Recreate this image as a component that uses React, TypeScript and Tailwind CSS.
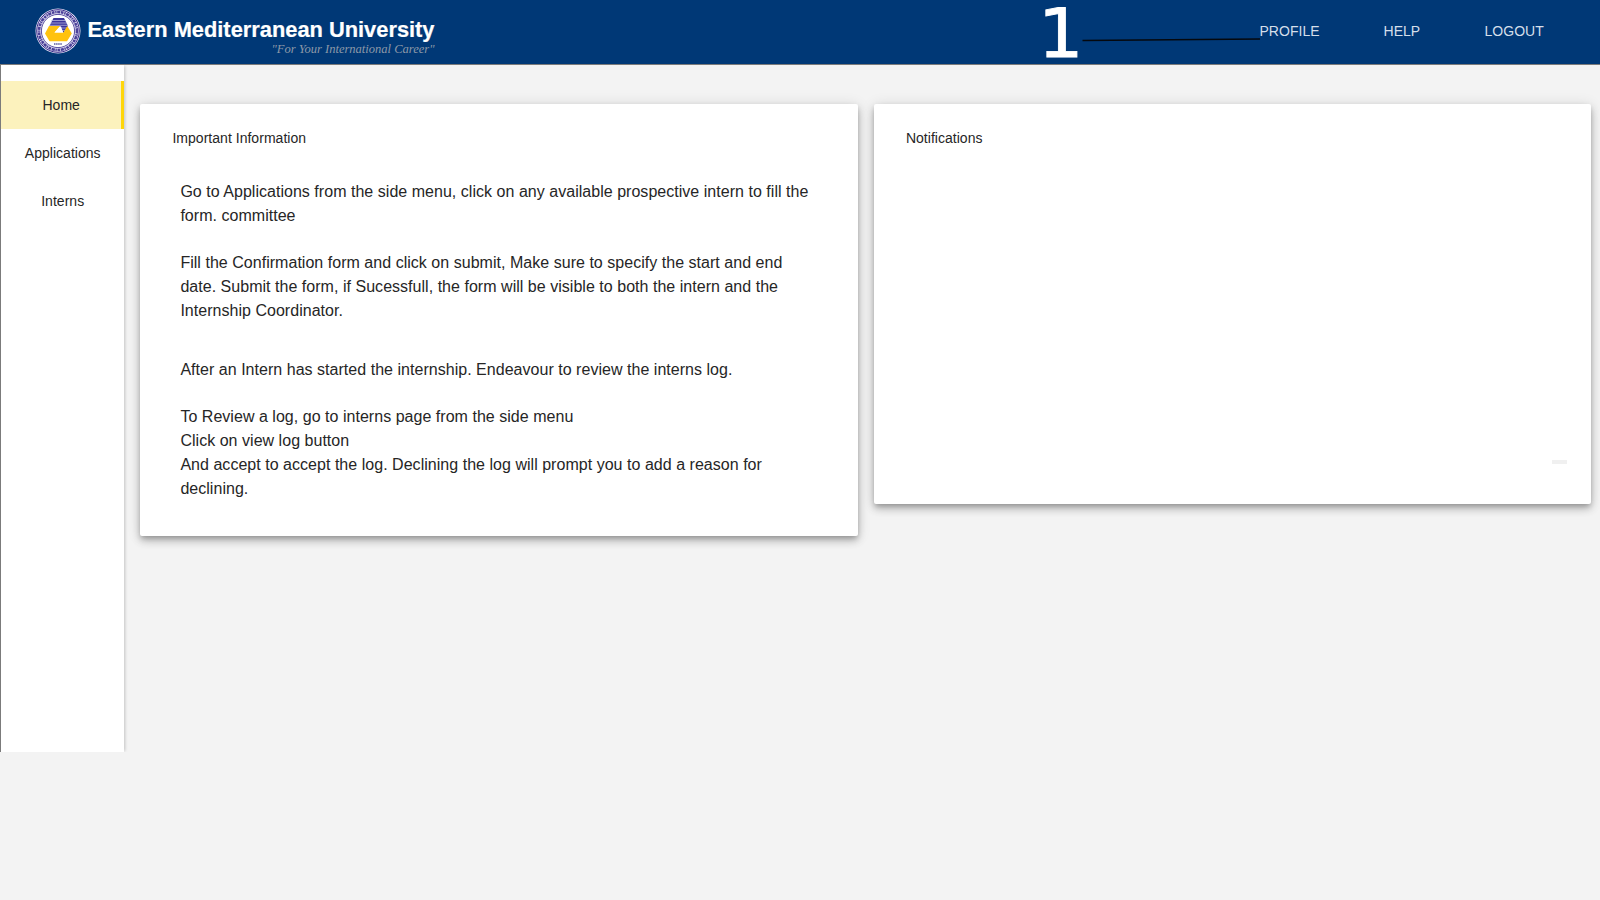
import React from "react";

const navLinks = [
  { label: "PROFILE", className: "w-[60px]" },
  { label: "HELP", className: "ml-16 w-[37px]" },
  { label: "LOGOUT", className: "ml-16 w-[60px]" },
];

function Crest() {
  return (
    <svg width="46" height="46" viewBox="0 0 46 46" className="shrink-0">
      <circle cx="23" cy="23" r="22.500" fill="#e4e3f3" />
      <circle cx="23" cy="23" r="21.300" fill="none" stroke="#3b2c8c" strokeWidth="1" />
      <circle cx="23" cy="23" r="19" fill="none" stroke="#4b4099" strokeWidth="2.600" strokeDasharray="2.600 0.700 1.400 0.600 3.200 0.700" />
      <circle cx="23" cy="23" r="16.600" fill="#fff" stroke="#4a3d98" strokeWidth="0.900" />
      <path d="M18.500 10h10.500l4 8-4.500 7-4-7H14.500z" fill="#3b359b" />
      <path d="M16 12.500h15M15 15h17M14 17.300h19M26 20h6M27 22.400h4" stroke="#c9c8ea" strokeWidth="0.700" />
      <path d="M14 17.900h11L19.500 24.500H28.500L32.300 17.900l4.500 7.600L32 33.200H14.500L10 25.500z" fill="#ffc20e" />
      <path d="M25.800 18l2.400 6.500h-8.700z" fill="#fff" />
      <path d="M19 36h8" stroke="#57579a" strokeWidth="1.500" strokeDasharray="1.500 .6" />
    </svg>
  );
}

function Header() {
  return (
    <header className="flex h-[65px] border-b border-[#7b7b7b] bg-[#003876] pl-[35px] pr-[55.500px]">
      <div className="flex pt-2">
        <Crest />
        <svg width="360" height="50" className="shrink-0 overflow-visible">
          <text x="6.500" y="28.500" textLength="347" lengthAdjust="spacingAndGlyphs" fill="#fff" stroke="#fff" strokeWidth="0.200" className="font-['Liberation_Sans',sans-serif] text-[21.500px] font-bold">
            Eastern Mediterranean University
          </text>
          <text x="190.500" y="45" textLength="163" lengthAdjust="spacingAndGlyphs" fill="#8d99a8" className="font-['Liberation_Serif',serif] text-[13.500px] italic">
            "For Your International Career"
          </text>
        </svg>
      </div>
      <div className="ml-auto flex">
        <svg width="230" height="64" className="shrink-0 overflow-visible">
          <text x="8" y="56.500" textLength="45.500" lengthAdjust="spacingAndGlyphs" fill="#fff" stroke="#fff" strokeWidth="0.800" className="font-['DejaVu_Sans',sans-serif] text-[68px]">
            1
          </text>
          <path d="M52.500 40.500L230 39" stroke="#05080d" strokeWidth="1.300" />
        </svg>
        <nav className="flex pt-[21px] text-[14px] leading-5 tracking-[0.02px] text-[#d5dfea]">
          {navLinks.map((l) => (
            <a key={l.label} className={l.className}>{l.label}</a>
          ))}
        </nav>
      </div>
    </header>
  );
}

function Sidebar() {
  return (
    <aside className="h-[687px] w-[124.400px] shrink-0 border-l border-[#7b7b7b] bg-white pt-4 text-center text-[14px] leading-[48px] tracking-[0.03px] shadow-[2px_0_3px_-1px_rgba(0,0,0,0.2)] [clip-path:inset(0_-6px_0_0)]">
      <div className="h-12 border-r-[3px] border-[#ffd60a] bg-[#fcf2bd]">Home</div>
      <div className="h-12">Applications</div>
      <div className="h-12">Interns</div>
    </aside>
  );
}

const cardClass =
  "rounded-[2px] bg-white px-8 pt-6 shadow-[0_3px_5px_-1px_rgba(0,0,0,0.2),0_5px_8px_0_rgba(0,0,0,0.2),0_1px_14px_0_rgba(0,0,0,0.12)]";

export default function App() {
  return (
    <div className="flex h-[900px] w-[1600px] flex-col overflow-hidden bg-[#f3f3f3] font-['Liberation_Sans',Arial,sans-serif] text-[#262626]">
      <Header />
      <div className="flex">
        <Sidebar />
        <main className="flex items-start gap-4 pl-4 pt-[39px]">
          <section className={`${cardClass} h-[432px] w-[717.500px]`}>
            <h2 className="text-[14px] leading-5 tracking-[0.030px]">Important Information</h2>
            <div className="whitespace-nowrap px-2 pt-[32px] text-[16px] leading-6 tracking-[0.030px]">
              <p>
                Go to Applications from the side menu, click on any available prospective intern to fill the
                <br />
                form. committee
              </p>
              <p className="mt-[23px]">
                Fill the Confirmation form and click on submit, Make sure to specify the start and end
                <br />
                date. Submit the form, if Sucessfull, the form will be visible to both the intern and the
                <br />
                Internship Coordinator.
              </p>
              <p className="mt-[35px]">After an Intern has started the internship. Endeavour to review the interns log.</p>
              <p className="mt-[23px]">
                To Review a log, go to interns page from the side menu
                <br />
                Click on view log button
                <br />
                And accept to accept the log. Declining the log will prompt you to add a reason for
                <br />
                declining.
              </p>
            </div>
          </section>
          <section className={`${cardClass} flex h-[400px] w-[717.500px] flex-col`}>
            <h2 className="text-[14px] leading-5 tracking-[0.030px]">Notifications</h2>
            <div className="mb-10 mr-[-8px] mt-auto h-1 w-[15px] self-end bg-[#f0f0f0]" />
          </section>
        </main>
      </div>
    </div>
  );
}
